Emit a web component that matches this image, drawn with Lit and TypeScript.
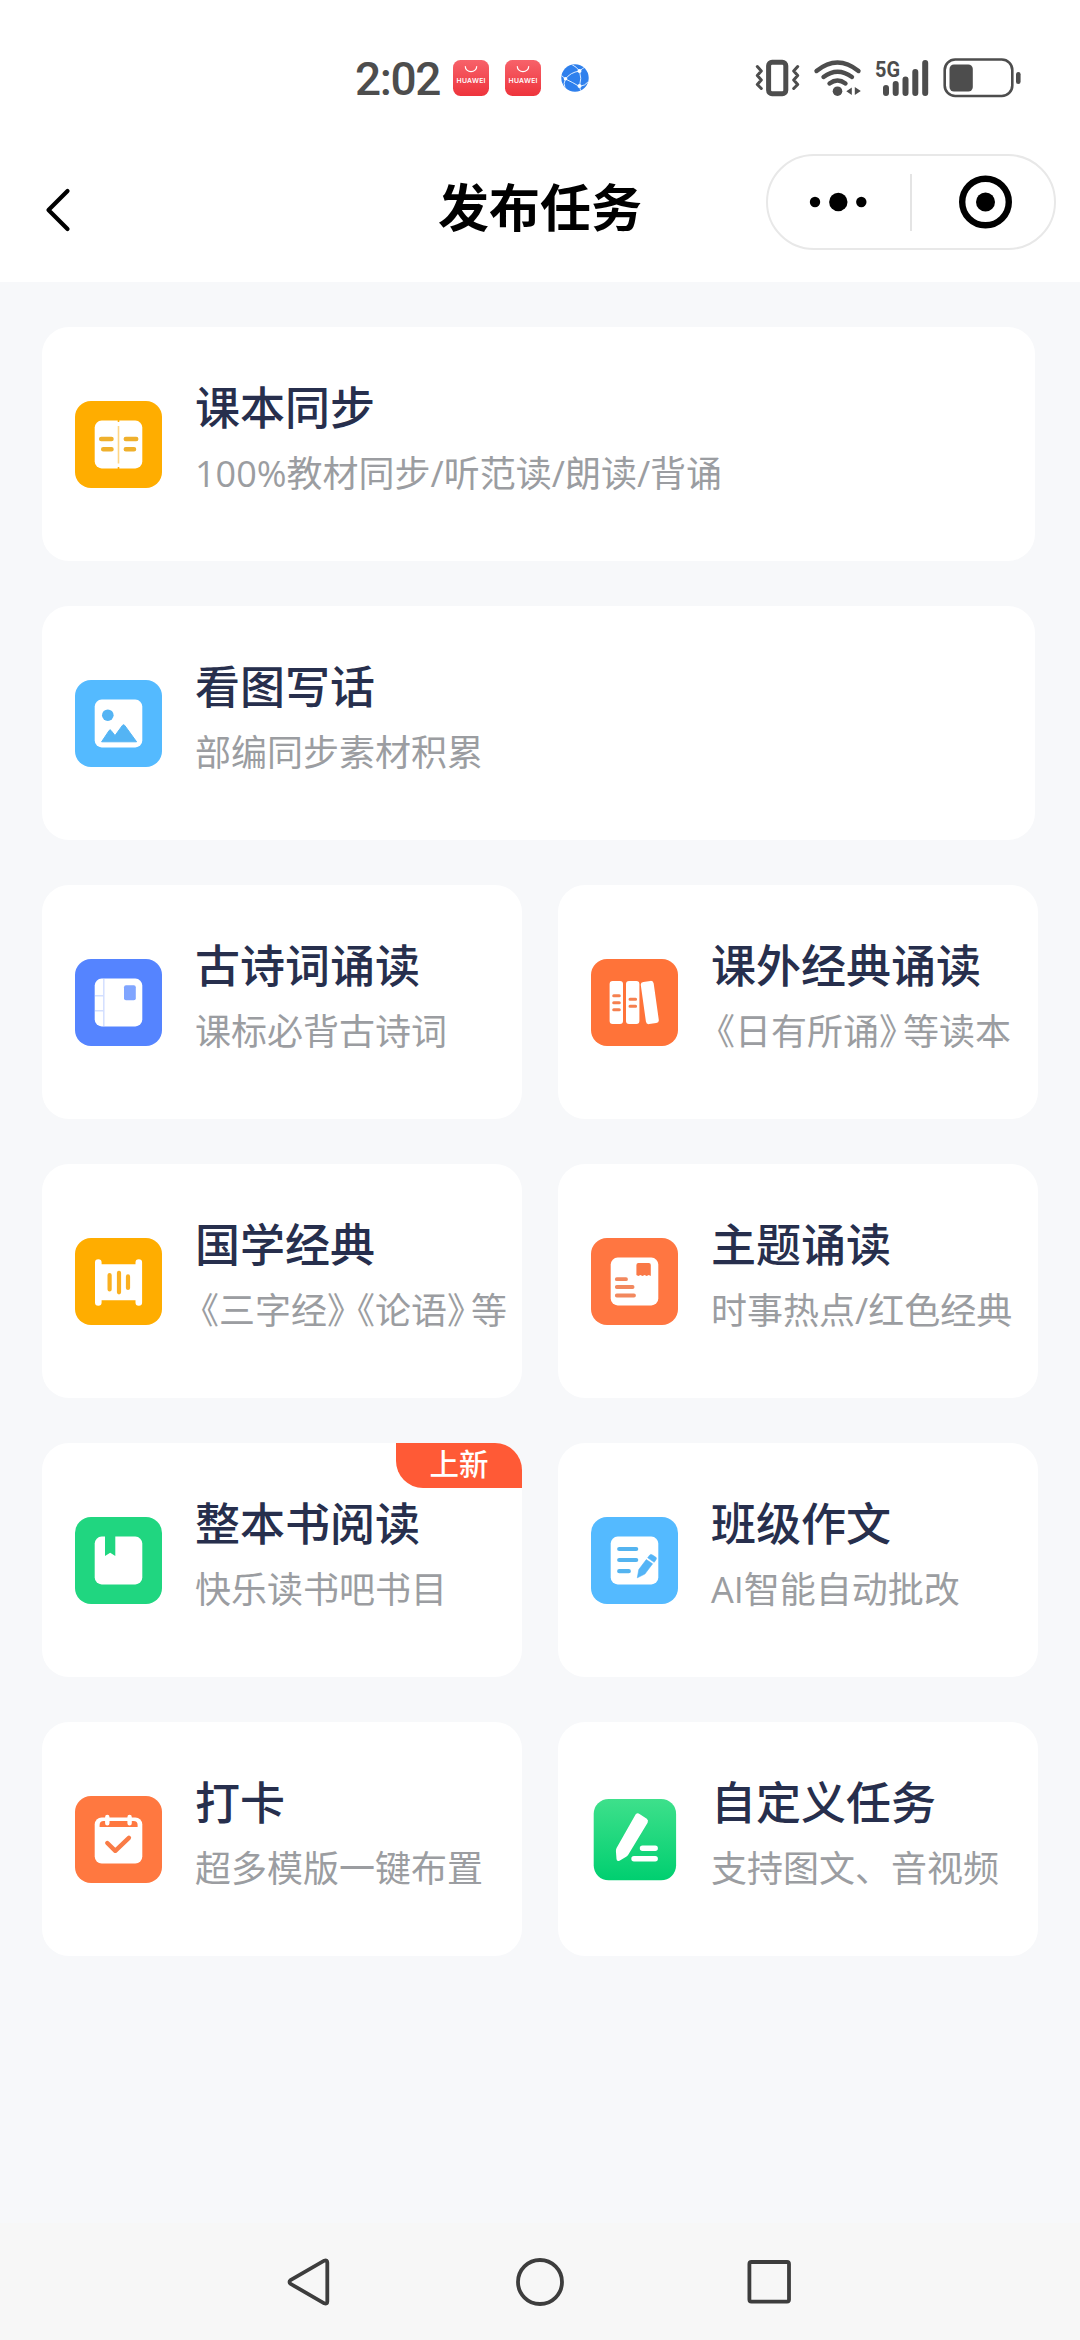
import { LitElement, html, svg, css } from "lit";
import { customElement, property } from "lit/decorators.js";
import { classMap } from "lit/directives/class-map.js";

const FONT = css`"Open Sans", "Noto Sans CJK SC", sans-serif`;

const sheet = svg`<rect x="19.7" y="19.6" width="47.6" height="47.8" rx="7" fill="#fff"/>`;

const icons: Record<string, unknown> = {
  textbook: svg`<rect width="87" height="87" rx="16" fill="#ffad00"/>${sheet}
    <path d="M43.5 19v2M43.5 66v2" stroke="#ffad00" stroke-width="1.6"/>
    <path d="M43.5 25v37.5" stroke="#ffd684" stroke-width="1.6"/>
    <path d="M26.2 37.9h10.3M50.8 37.9h10.4M28.2 48.3h8.3M50.8 48.3h8.2" stroke="#efb02c" stroke-width="4.5" stroke-linecap="round"/>`,
  picture: svg`<rect width="87" height="87" rx="16" fill="#54baff"/>${sheet}
    <circle cx="32.8" cy="35.2" r="5.8" fill="#54b4f4"/>
    <path d="M26.6 61.8 34.2 50.4q.9-1.2 1.8 0l4 5.2 7.4-10.2q1.2-1.4 2.3 0l11.9 16.4z" fill="#54b4f4" stroke="#54b4f4" stroke-width="1" stroke-linejoin="round"/>`,
  poem: svg`<rect width="87" height="87" rx="16" fill="#5584ff"/>${sheet}
    <path d="M28.8 20v47M20 36.7h8.5M20 51.7h8.5" stroke="#d3dfff" stroke-width="1.5"/>
    <rect x="49" y="26.2" width="11.8" height="15" rx="2" fill="#80a5ff"/>`,
  books: svg`<rect width="87" height="87" rx="16" fill="#ff7339"/>
    <rect x="18.6" y="22" width="13.4" height="43" rx="3" fill="#fff"/>
    <rect x="35" y="22" width="13.4" height="43" rx="3" fill="#fff"/>
    <rect x="52.3" y="22.2" width="13" height="42.6" rx="3" fill="#fff" transform="rotate(-8 58.8 43.5)"/>
    <path d="M22.7 36.8h5.6M22.7 43.7h5.6M22.7 50.7h5.6M39 40.2h5.6M39 47.2h5.6" stroke="#f5804f" stroke-width="3" stroke-linecap="round"/>`,
  scroll: svg`<rect width="87" height="87" rx="16" fill="#ffad00"/>
    <path d="M23.3 26.3h40.5v36H23.3z" fill="#fff"/>
    <path d="M23.3 24.5v40M63.8 24.5v40" stroke="#fff" stroke-width="6.6" stroke-linecap="round"/>
    <path d="M34.6 37v14.5M44 34.8v19.5M53 38.4v11.5" stroke="#fab020" stroke-width="4.2" stroke-linecap="round"/>`,
  topic: svg`<rect width="87" height="87" rx="16" fill="#ff7641"/>${sheet}
    <path d="M47.5 24.9h10.3q2 0 2 2v11.2l-2-1-2.1 1-2.1-1-2.1 1-2.1-1-2.1 1-1.9-1V26.9q0-2 2-2z" fill="#fa7846"/>
    <path d="M25.8 41.2h9.2M25.8 49h15.8M25.8 57.5h17.2" stroke="#f2885e" stroke-width="3.8" stroke-linecap="round"/>`,
  book: svg`<rect width="87" height="87" rx="16" fill="#20d680"/>${sheet}
    <path d="M30 19h10.3v20l-5.1-3.2L30 39z" fill="#20d680"/>`,
  essay: svg`<rect width="87" height="87" rx="16" fill="#54baff"/>${sheet}
    <path d="M28.2 32h17M28.2 43h17M28.2 54.2h9.6" stroke="#54b4f0" stroke-width="4.2" stroke-linecap="round"/>
    <path d="M46.3 60.8 47.8 52.5 55.3 42.6 61.6 46.8 53.9 57z M56.7 40.8 58.6 38.2q1-1.3 2.4-.4l3.7 2.3q1.3 1 .4 2.4l-1.9 2.8z" fill="#54b4f6" stroke="#54b4f6" stroke-width=".6" stroke-linejoin="round"/>`,
  calendar: svg`<rect width="87" height="87" rx="16" fill="#ff7840"/>
    <rect x="19.7" y="21.5" width="47.6" height="46" rx="7" fill="#fff"/>
    <path d="M24.6 31v-2q0-4 4-4h30q4 0 4 4v2z" fill="#ff7840"/>
    <path d="M32.3 21v6.3M54.6 21v6.3" stroke="#fff" stroke-width="4.4" stroke-linecap="round"/>
    <path d="m32.3 47 8 7.8 13.6-13" fill="none" stroke="#f97b46" stroke-width="4.4" stroke-linecap="round" stroke-linejoin="round"/>`,
  custom: svg`<defs><linearGradient id="g" x1="0" y1="0" x2="0" y2="1"><stop offset="0" stop-color="#3ee08b"/><stop offset="1" stop-color="#00cf70"/></linearGradient></defs>
    <rect x="2.7" y="2.9" width="82.4" height="81.4" rx="15" fill="url(#g)"/>
    <path d="M44.7 18.2q1.8-1.6 3.8-.3l7.3 4.8q2 1.5.8 4L37.4 58.4q-.8 1.5-2.2 2.3l-6.7 4q-2.8 1.2-3-1.8l-.6-8q0-1.8.8-3.2z" fill="#fff"/>
    <path d="M51.5 52.2h12.7M43 62.8h21.2" stroke="#fff" stroke-width="5.4" stroke-linecap="round"/>`,
};

interface Task {
  icon: string;
  title: string;
  note: string;
  wide?: boolean;
  tag?: string;
}

const tasks: Task[] = [
  { icon: "textbook", title: "课本同步", note: "100%教材同步/听范读/朗读/背诵", wide: true },
  { icon: "picture", title: "看图写话", note: "部编同步素材积累", wide: true },
  { icon: "poem", title: "古诗词诵读", note: "课标必背古诗词" },
  { icon: "books", title: "课外经典诵读", note: "《日有所诵》等读本" },
  { icon: "scroll", title: "国学经典", note: "《三字经》《论语》等" },
  { icon: "topic", title: "主题诵读", note: "时事热点/红色经典" },
  { icon: "book", title: "整本书阅读", note: "快乐读书吧书目", tag: "上新" },
  { icon: "essay", title: "班级作文", note: "AI智能自动批改" },
  { icon: "calendar", title: "打卡", note: "超多模版一键布置" },
  { icon: "custom", title: "自定义任务", note: "支持图文、音视频" },
];

/* Book-title brackets take two thirds of a full character cell. */
const withBrackets = (text: string) =>
  text.split(/([《》])/).map((part) =>
    part === "《" ? html`<span class="open">${part}</span>`
    : part === "》" ? html`<span class="close">${part}</span>`
    : part);

@customElement("task-card")
class TaskCard extends LitElement {
  @property({ attribute: false }) task!: Task;

  static styles = css`
    :host { display: block; min-width: 0; }
    .card {
      position: relative; display: flex; align-items: center; gap: 33px;
      height: 234px; padding-left: 33px; box-sizing: border-box;
      background: #fff; border-radius: 27px; overflow: hidden;
      font-family: ${FONT}; white-space: nowrap;
    }
    .wide { margin-right: 3px; }
    .icon { width: 87px; height: 87px; flex: none; display: block; }
    .text { display: flex; flex-direction: column; gap: 4px; padding-bottom: 10px; }
    .title { font-size: 45px; line-height: 66px; font-weight: 500; color: #272f4d; font-family: "Noto Sans CJK SC", sans-serif; }
    .note { font-size: 36px; line-height: 62px; color: #9b9da1; text-spacing-trim: space-all; }
    .open, .close { display: inline-block; font-feature-settings: "halt" 1; }
    .open { padding-left: 6px; }
    .close { padding-right: 6px; }
    .tag {
      position: absolute; top: 0; right: 0; width: 126px; height: 45px;
      background: #ff5a36; color: #fff; border-bottom-left-radius: 27px;
      font: 500 29.5px/39px "Noto Sans CJK SC", sans-serif; text-align: center;
    }
  `;

  render() {
    const t = this.task;
    return html`<div class=${classMap({ card: true, wide: !!t.wide })}>
      <svg class="icon" viewBox="0 0 87 87">${icons[t.icon]}</svg>
      <div class="text"><div class="title">${t.title}</div><div class="note">${withBrackets(t.note)}</div></div>
      ${t.tag ? html`<div class="tag">${t.tag}</div>` : null}
    </div>`;
  }
}

const appBadge = html`<svg class="badge" viewBox="0 0 36 36">
  <defs><linearGradient id="r" x1="0" y1="0" x2="0" y2="1"><stop offset="0" stop-color="#f7626a"/><stop offset="1" stop-color="#ee343c"/></linearGradient></defs>
  <rect width="36" height="36" rx="7.5" fill="url(#r)"/>
  <path d="M12.3 6.5a5.7 5.2 0 0 0 11.4 0" fill="none" stroke="#fff" stroke-width="1.2" stroke-linecap="round"/>
  <text x="18" y="23" text-anchor="middle" textLength="29" font-family="Inter, sans-serif" font-size="6.8" font-weight="600" fill="#fff">HUAWEI</text>
</svg>`;

@customElement("app-root")
class AppRoot extends LitElement {
  static styles = css`
    :host { display: block; }
    .page {
      display: flex; flex-direction: column; width: 1080px; height: 2340px;
      background: #f7f8fa; font-family: ${FONT}; overflow: hidden;
    }
    .status {
      display: flex; align-items: center; height: 116px; padding: 40px 40px 0 355px;
      box-sizing: border-box; background: #fff;
    }
    .clock { width: 98px; margin-top: 1px; font: 500 46px/76px Roboto, sans-serif; color: #4d4d4d; letter-spacing: -1.4px; }
    .badge { width: 36px; height: 36px; margin-right: 16px; }
    .globe { width: 28px; height: 28px; margin-left: 4px; }
    .signals { width: 300px; height: 80px; margin: 4px 0 0 auto; }
    .header {
      display: grid; grid-template-columns: 1fr auto 1fr; align-items: center;
      height: 166px; padding: 0 24px 0 44px; box-sizing: border-box; background: #fff;
    }
    .back { width: 28px; height: 46px; margin-top: 22px; }
    .heading { font: 700 51px/72px "Noto Sans CJK SC", sans-serif; color: #000; margin: 12px 10px 0 -10px; }
    .capsule { justify-self: end; width: 290px; height: 96px; margin-top: 6px; }
    .list {
      flex: 1; display: grid; grid-template-columns: 480px 480px; gap: 45px 36px;
      align-content: start; padding: 45px 42px 0;
    }
    .span { grid-column: 1 / -1; }
    .nav {
      display: flex; justify-content: space-between; align-items: center;
      height: 117px; padding: 0 285px; background: #f7f7f7; box-sizing: border-box;
    }
    .key { width: 50px; height: 50px; }
  `;

  render() {
    return html`<div class="page">
      <div class="status">
        <div class="clock">2:02</div>
        ${appBadge}${appBadge}
        <svg class="globe" viewBox="0 0 28 28">
          <defs><clipPath id="c"><circle cx="14" cy="14" r="13.7"/></clipPath></defs>
          <circle cx="14" cy="14" r="13.7" fill="#2f80ed"/>
          <g clip-path="url(#c)" fill="none" stroke="#dcecff" stroke-width="1">
            <path d="M4.5 15Q11 18 18.5 22.5M4.5 15Q9 8.5 18.5 7M18.5 7Q21 14 18.5 22.5M18.5 7Q16 3 10 0M18.5 7Q22 4 24 3M18.5 22.5Q24 22 28 17M18.5 22.5L20 28M4.5 15Q2 19 4 24M4.5 15L0 11"/>
          </g>
          <g fill="#fff"><circle cx="18.5" cy="7" r="2"/><circle cx="4.5" cy="14.8" r="1.8"/><circle cx="18.5" cy="22" r="2"/></g>
        </svg>
        <svg class="signals" viewBox="0 0 300 80">
          <g fill="none" stroke="#4d4d4d" stroke-linecap="round" stroke-linejoin="round">
            <rect x="28.6" y="22.3" width="17.2" height="31.4" rx="3.5" stroke-width="5"/>
            <path d="M17.3 26.5 21.3 31 17.3 35.5 21.3 40 17.3 44.5 21.3 48.5M57.7 26.5 53.7 31 57.7 35.5 53.7 40 57.7 44.5 53.7 48.5" stroke-width="3"/>
            <path d="M76.5 31Q97.5 14 118.5 31M83.5 37Q97.5 26.5 112 37M89.5 43.5Q97.5 37.5 105.5 43.5" stroke-width="4.4"/>
            <path d="M146 48v5M155.7 44v9M165.5 39.5v13.5M175.3 32v21M185.2 23v30" stroke-width="6"/>
            <rect x="204.7" y="19.5" width="67.6" height="36.5" rx="10.5" stroke-width="2.6"/>
            <path d="M278.3 34.2v7.6" stroke-width="4.6"/>
          </g>
          <g fill="#4d4d4d">
            <circle cx="97.5" cy="51.2" r="4.8"/>
            <path d="M111.8 47.5v7.5l-5.5-3.800zM114.800 47v8l6-4z"/>
            <rect x="209.5" y="24.5" width="23.3" height="27" rx="4.5"/>
            <text x="135" y="37" font-family="Roboto, sans-serif" font-size="22.5" font-weight="700" textLength="25" lengthAdjust="spacingAndGlyphs">5G</text>
          </g>
        </svg>
      </div>
      <div class="header">
        <svg class="back" viewBox="0 0 28 46"><path d="M23.5 4 4.5 23l19 19" fill="none" stroke="#000" stroke-width="4.2" stroke-linecap="round" stroke-linejoin="round"/></svg>
        <div class="heading">发布任务</div>
        <svg class="capsule" viewBox="0 0 290 96">
          <rect x="1" y="1" width="288" height="94" rx="47" fill="#fff" stroke="#e8e8e8" stroke-width="2"/>
          <path d="M145 20v57" stroke="#dedede" stroke-width="1.6"/>
          <circle cx="49" cy="48" r="5.2"/><circle cx="72.3" cy="48" r="9.2"/><circle cx="95.3" cy="48" r="5.2"/>
          <circle cx="219.5" cy="48" r="23.3" fill="none" stroke="#000" stroke-width="6.4"/><circle cx="219.5" cy="48" r="9.5"/>
        </svg>
      </div>
      <div class="list">
        ${tasks.map((t) => html`<task-card class=${classMap({ span: !!t.wide })} .task=${t}></task-card>`)}
      </div>
      <div class="nav">
        <svg class="key" viewBox="0 0 50 50"><path d="M5.5 23.2 39.2 3.7Q42.3 2.5 42.3 5.5V44.5Q42.3 47.5 39.2 46.3L5.5 26.8Q3.5 25 5.5 23.2z" fill="none" stroke="#3d3d3d" stroke-width="3.8"/></svg>
        <svg class="key" viewBox="0 0 50 50"><circle cx="25" cy="25" r="22" fill="none" stroke="#3d3d3d" stroke-width="3.8"/></svg>
        <svg class="key" viewBox="0 0 50 50"><rect x="4.4" y="5" width="39.6" height="39.6" rx="2" fill="none" stroke="#3d3d3d" stroke-width="3.8"/></svg>
      </div>
    </div>`;
  }
}
